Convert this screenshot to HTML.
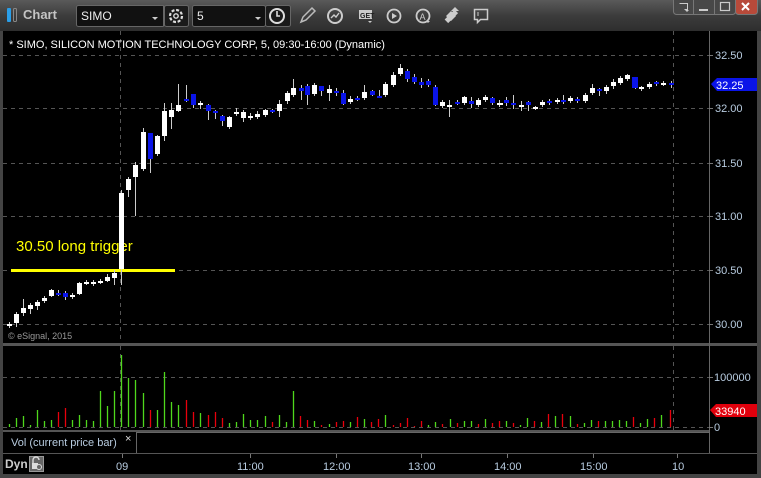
<!DOCTYPE html>
<html><head><meta charset="utf-8"><style>
*{margin:0;padding:0;box-sizing:border-box}
body{width:761px;height:478px;background:#3a3a3a;overflow:hidden;font-family:"Liberation Sans",sans-serif;position:relative}
.tb{position:absolute;left:0;top:0;width:761px;height:31px;background:linear-gradient(#5a5a5a,#3c3c3c 50%,#2e2e2e)}
.t{position:absolute;white-space:nowrap}
svg{position:absolute;left:0;top:0}
</style></head><body>
<div class="tb"></div>
<svg width="761" height="478" xmlns="http://www.w3.org/2000/svg">
<!-- title bar -->
<rect x="7" y="8" width="4" height="14" rx="1" fill="#2a9ee8"/>
<rect x="13.5" y="8.5" width="3" height="13" rx="1" fill="none" stroke="#888"/>
<rect x="76.5" y="5.5" width="88" height="21" rx="2" fill="#111" stroke="#666"/>
<line x1="163.5" y1="6" x2="163.5" y2="26" stroke="#666"/>
<path d="M152 17l3 3 3-3z" fill="#ccc"/>
<rect x="164.5" y="5.5" width="24" height="21" rx="2" fill="#1a1a1a" stroke="#666"/>
<circle cx="176" cy="16" r="6" fill="none" stroke="#ddd" stroke-width="2.2" stroke-dasharray="3 1.7"/><circle cx="176" cy="16" r="2.2" fill="none" stroke="#ddd" stroke-width="1.4"/>
<rect x="192.5" y="5.5" width="73" height="21" rx="2" fill="#111" stroke="#666"/>
<path d="M255 17l3 3 3-3z" fill="#ccc"/>
<rect x="265.5" y="5.5" width="25" height="21" rx="2" fill="#1a1a1a" stroke="#666"/>
<circle cx="277" cy="16" r="7" fill="none" stroke="#ddd" stroke-width="2"/><path d="M277 11v5h3" stroke="#ddd" stroke-width="1.6" fill="none"/>
<path d="M301 22l2-5 9-9 3 3-9 9z" fill="none" stroke="#bbb" stroke-width="1.5"/>
<circle cx="335" cy="16" r="7" fill="none" stroke="#ccc" stroke-width="2"/><path d="M331 18l3-3 2 2 3-4" stroke="#ccc" stroke-width="1.4" fill="none"/>
<rect x="359" y="10" width="13" height="9" fill="#ccc"/><text x="360" y="18" font-size="7" font-weight="bold" fill="#222" font-family="Liberation Sans">GET</text><path d="M368 21l2 2 2-2z" fill="#ccc"/>
<circle cx="394" cy="16" r="6.5" fill="none" stroke="#ccc" stroke-width="1.8"/><path d="M392 13v6l5-3z" fill="#ccc"/>
<circle cx="423" cy="16" r="6.5" fill="none" stroke="#ccc" stroke-width="1.8"/><text x="419.5" y="20" font-size="9" fill="#ccc" font-family="Liberation Sans">A</text><path d="M426 21l2 2 2-2z" fill="#ccc"/>
<path d="M446 16l5-5 5 5-5 5z M451 11l4-4 4 4" fill="#ccc"/><rect x="444" y="14" width="14" height="5" transform="rotate(-45 451 16)" fill="#ccc"/>
<path d="M474.5 9.5h13v10h-7l-3 3v-3h-3z" fill="none" stroke="#ccc" stroke-width="1.5"/><line x1="478" y1="12" x2="478" y2="16" stroke="#ccc"/>
<!-- window buttons -->
<rect x="673.5" y="-2.5" width="62" height="17" rx="3" fill="#484848" stroke="#777"/>
<line x1="693.5" y1="0" x2="693.5" y2="14" stroke="#777"/><line x1="714.5" y1="0" x2="714.5" y2="14" stroke="#777"/>
<rect x="735.5" y="-2.5" width="22" height="17" rx="3" fill="#b84a3a" stroke="#777"/>
<path d="M679.5 3.5h8v6h-3" fill="none" stroke="#ccc"/><path d="M685 10l2 2 2-2z" fill="#ccc"/>
<rect x="699" y="9" width="9" height="2" fill="#ccc"/>
<rect x="720.5" y="2.5" width="9" height="8" fill="none" stroke="#ccc" stroke-width="1.2"/>
<path d="M742 3l7 7M749 3l-7 7" stroke="#fff" stroke-width="2"/>
<!-- main chart area -->
<rect x="3" y="31" width="755" height="444" fill="#000"/>
<rect x="0" y="31" width="3" height="447" fill="#444"/>
<rect x="757" y="31" width="4" height="447" fill="#444"/>
<rect x="3" y="343" width="754" height="3" fill="#555"/>
<line x1="709.5" y1="31" x2="709.5" y2="454" stroke="#666"/>
<g stroke="#555" stroke-dasharray="4 4">
<line x1="3" y1="55.5" x2="709" y2="55.5"/><line x1="3" y1="108.5" x2="709" y2="108.5"/><line x1="3" y1="163.5" x2="709" y2="163.5"/><line x1="3" y1="216.5" x2="709" y2="216.5"/><line x1="3" y1="270.5" x2="709" y2="270.5"/><line x1="3" y1="324.5" x2="709" y2="324.5"/>
<line x1="3" y1="377.5" x2="709" y2="377.5"/><line x1="3" y1="427.5" x2="709" y2="427.5"/>
<line x1="120.5" y1="31" x2="120.5" y2="343"/><line x1="673.5" y1="31" x2="673.5" y2="343"/>
<line x1="120.5" y1="346" x2="120.5" y2="430"/><line x1="673.5" y1="346" x2="673.5" y2="430"/>
</g>
<g fill="#b8cce0" font-size="11" font-family="Liberation Sans">
<text x="715" y="59">32.50</text><text x="715" y="112">32.00</text><text x="715" y="167">31.50</text><text x="715" y="220">31.00</text><text x="715" y="274">30.50</text><text x="715" y="328">30.00</text>
<text x="714" y="381">100000</text><text x="714" y="431">0</text>
</g>
<g stroke="#777"><line x1="709" y1="55.5" x2="713" y2="55.5"/><line x1="709" y1="108.5" x2="713" y2="108.5"/><line x1="709" y1="163.5" x2="713" y2="163.5"/><line x1="709" y1="216.5" x2="713" y2="216.5"/><line x1="709" y1="270.5" x2="713" y2="270.5"/><line x1="709" y1="324.5" x2="713" y2="324.5"/><line x1="709" y1="377.5" x2="713" y2="377.5"/><line x1="709" y1="427.5" x2="713" y2="427.5"/></g>
<path d="M711 84l6-6h40v13h-40z" fill="#0a14e8"/><text x="716" y="89" font-size="11" fill="#fff" font-family="Liberation Sans">32.25</text>
<path d="M710 410l6-6h41v13h-41z" fill="#e0000c"/><text x="715" y="415" font-size="11" fill="#fff" font-family="Liberation Sans">33940</text>
<text x="9" y="48" font-size="11" fill="#fff" font-family="Liberation Sans">* SIMO, SILICON MOTION TECHNOLOGY CORP, 5, 09:30-16:00 (Dynamic)</text>
<text x="8" y="339" font-size="9" fill="#999" font-family="Liberation Sans">© eSignal, 2015</text>
<!-- trigger -->
<rect x="11" y="269" width="164" height="3" fill="#ffff00"/>
<text x="16" y="251" font-size="15" fill="#ffff00" font-family="Liberation Sans">30.50 long trigger</text>
<!-- candles -->
<g stroke="#ccc" stroke-width="1">
<path d="M9.5 322v6M16.5 312v15M23.5 299v17M30.5 303v11M37.5 300v10M44.5 296v7M51.5 289v8M58.5 290v6M65.5 291v9M72.5 293v6M79.5 282v13M86.5 280v5M93.5 280v6M100.5 279v5M107.5 274v8M114.5 270v15M121.5 190v95M128.5 177v20M135.5 162v54M143.5 128v43M150.5 133v40M157.5 135v21M164.5 103v38M171.5 103v26M178.5 84v28M186.5 85v17M193.5 94v14M200.5 101v8M208.5 104v16M215.5 110v9M222.5 115v11M229.5 116v13M236.5 108v8M243.5 110v12M250.5 113v7M257.5 111v8M265.5 109v8M272.5 109v4M279.5 100v17M287.5 91v13M293.5 79v18M301.5 85v15M307.5 84v21M314.5 83v13M321.5 86v10M329.5 85v16M336.5 88v8M343.5 90v15M350.5 96v8M357.5 96v5M364.5 85v15M372.5 90v6M379.5 90v8M385.5 82v15M393.5 72v15M400.5 64v12M407.5 69v13M414.5 74v10M421.5 78v10M428.5 79v8M435.5 85v21M442.5 100v8M449.5 100v17M457.5 100v5M464.5 96v9M471.5 97v11M478.5 98v9M485.5 95v7M492.5 97v8M499.5 100v7M506.5 97v9M513.5 95v14M521.5 101v10M528.5 101v10M535.5 106v4M542.5 100v7M549.5 99v6M557.5 98v6M563.5 95v9M570.5 96v7M577.5 97v6M585.5 93v10M592.5 84v11M599.5 88v8M606.5 85v9M613.5 79v10M620.5 76v9M627.5 74v7M635.5 77v12M641.5 86v5M649.5 82v7M656.5 81v5M663.5 81v5M671.5 81v7"/>
</g>
<g fill="#fff">
<rect x="7" y="324" width="5" height="2"/><rect x="14" y="314" width="5" height="9"/><rect x="21" y="308" width="5" height="5"/><rect x="28" y="305" width="5" height="4"/><rect x="35" y="302" width="5" height="4"/><rect x="42" y="298" width="5" height="3"/><rect x="49" y="290" width="5" height="6"/><rect x="70" y="295" width="5" height="2"/><rect x="77" y="283" width="5" height="11"/><rect x="84" y="282" width="5" height="2"/><rect x="91" y="282" width="5" height="2"/><rect x="98" y="281" width="5" height="2"/><rect x="105" y="277" width="5" height="4"/><rect x="112" y="273" width="5" height="5"/><rect x="119" y="193" width="5" height="76"/><rect x="126" y="179" width="5" height="11"/><rect x="133" y="165" width="5" height="12"/><rect x="141" y="132" width="5" height="37"/><rect x="155" y="136" width="5" height="18"/><rect x="162" y="111" width="5" height="25"/><rect x="169" y="110" width="5" height="7"/><rect x="176" y="105" width="5" height="6"/><rect x="198" y="103" width="5" height="2"/><rect x="227" y="117" width="5" height="10"/><rect x="234" y="112" width="5" height="2"/><rect x="241" y="112" width="5" height="6"/><rect x="248" y="116" width="5" height="2"/><rect x="255" y="114" width="5" height="3"/><rect x="263" y="110" width="5" height="5"/><rect x="277" y="104" width="5" height="7"/><rect x="285" y="93" width="5" height="8"/><rect x="291" y="88" width="5" height="7"/><rect x="312" y="85" width="5" height="9"/><rect x="327" y="89" width="5" height="4"/><rect x="348" y="99" width="5" height="3"/><rect x="362" y="92" width="5" height="6"/><rect x="383" y="84" width="5" height="11"/><rect x="391" y="75" width="5" height="10"/><rect x="398" y="68" width="5" height="6"/><rect x="440" y="102" width="5" height="4"/><rect x="447" y="105" width="5" height="2"/><rect x="462" y="97" width="5" height="6"/><rect x="476" y="100" width="5" height="5"/><rect x="483" y="97" width="5" height="3"/><rect x="497" y="103" width="5" height="2"/><rect x="498" y="103" width="5" height="2"/><rect x="519" y="105" width="5" height="2"/><rect x="533" y="107" width="5" height="2"/><rect x="540" y="102" width="5" height="3"/><rect x="555" y="100" width="5" height="2"/><rect x="568" y="98" width="5" height="3"/><rect x="583" y="95" width="5" height="6"/><rect x="590" y="88" width="5" height="5"/><rect x="604" y="87" width="5" height="4"/><rect x="611" y="82" width="5" height="4"/><rect x="618" y="78" width="5" height="5"/><rect x="625" y="75" width="5" height="4"/><rect x="639" y="87" width="5" height="2"/><rect x="647" y="84" width="5" height="3"/><rect x="661" y="83" width="5" height="2"/>
</g>
<g fill="#0a14e8">
<rect x="56" y="293" width="5" height="2"/><rect x="63" y="293" width="5" height="4"/><rect x="148" y="133" width="5" height="26"/><rect x="184" y="99" width="5" height="2"/><rect x="191" y="94" width="5" height="11"/><rect x="206" y="105" width="5" height="6"/><rect x="213" y="111" width="5" height="2"/><rect x="220" y="116" width="5" height="5"/><rect x="270" y="110" width="5" height="2"/><rect x="299" y="88" width="5" height="3"/><rect x="305" y="86" width="5" height="9"/><rect x="319" y="86" width="5" height="5"/><rect x="334" y="91" width="5" height="2"/><rect x="341" y="93" width="5" height="11"/><rect x="355" y="98" width="5" height="2"/><rect x="370" y="91" width="5" height="4"/><rect x="377" y="96" width="5" height="2"/><rect x="405" y="71" width="5" height="8"/><rect x="412" y="77" width="5" height="5"/><rect x="419" y="82" width="5" height="3"/><rect x="426" y="81" width="5" height="4"/><rect x="433" y="87" width="5" height="18"/><rect x="455" y="102" width="5" height="2"/><rect x="469" y="101" width="5" height="3"/><rect x="490" y="98" width="5" height="5"/><rect x="504" y="100" width="5" height="3"/><rect x="511" y="103" width="5" height="2"/><rect x="526" y="102" width="5" height="3"/><rect x="547" y="101" width="5" height="2"/><rect x="561" y="100" width="5" height="2"/><rect x="575" y="99" width="5" height="2"/><rect x="597" y="89" width="5" height="2"/><rect x="632" y="77" width="6" height="11"/><rect x="654" y="82" width="5" height="2"/><rect x="669" y="83" width="5" height="2"/>
</g>
<!-- volume -->
<g stroke="#4fd81c" stroke-width="1.3">
<path d="M9.5 427v-3M16.5 427v-9M23.5 427v-11M30.5 427v-2M37.5 427v-17M44.5 427v-6M51.5 427v-7M72.5 427v-7M79.5 427v-12M86.5 427v-7M93.5 427v-6M100.5 427v-36M107.5 427v-21M114.5 427v-36M121.5 427v-72M128.5 427v-49M135.5 427v-47M143.5 427v-34M157.5 427v-17M164.5 427v-55M171.5 427v-25M178.5 427v-22M200.5 427v-14M229.5 427v-4M236.5 427v-5M243.5 427v-13M250.5 427v-7M257.5 427v-7M265.5 427v-11M279.5 427v-12M286.5 427v-5M293.5 427v-36M314.5 427v-6M329.5 427v-3M350.5 427v-5M364.5 427v-8M385.5 427v-12M428.5 427v-2M435.5 427v-5M450.5 427v-8M464.5 427v-6M471.5 427v-6M485.5 427v-8M506.5 427v-6M520.5 427v-2M527.5 427v-9M541.5 427v-5M555.5 427v-11M570.5 427v-11M584.5 427v-4M591.5 427v-7M605.5 427v-6M612.5 427v-6M619.5 427v-7M626.5 427v-6M640.5 427v-4M647.5 427v-8M661.5 427v-12"/>
</g>
<g stroke="#e8000c" stroke-width="1.3">
<path d="M58.5 427v-15M65.5 427v-19M150.5 427v-17M186.5 427v-27M193.5 427v-15M208.5 427v-12M215.5 427v-15M222.5 427v-9M272.5 427v-5M300.5 427v-11M307.5 427v-7M321.5 427v-2M336.5 427v-5M343.5 427v-6M357.5 427v-10M371.5 427v-5M378.5 427v-8M393.5 427v-2M400.5 427v-4M407.5 427v-9M414.5 427v-1M421.5 427v-6M442.5 427v-3M457.5 427v-4M478.5 427v-3M492.5 427v-4M499.5 427v-6M513.5 427v-4M534.5 427v-6M548.5 427v-13M562.5 427v-13M577.5 427v-3M598.5 427v-6M633.5 427v-10M654.5 427v-9M670.5 427v-17"/>
</g>
<!-- vol label / time axis -->
<rect x="3" y="430" width="706" height="2" fill="#555"/>
<rect x="136.5" y="432.5" width="573" height="21" fill="#000" stroke="#666"/>
<text x="11" y="446" font-size="11" fill="#b8cce0" font-family="Liberation Sans">Vol (current price bar)</text>
<text x="125" y="442" font-size="11" fill="#ddd" font-family="Liberation Sans">×</text>
<rect x="3" y="453" width="754" height="1" fill="#555"/>
<text x="5" y="468" font-size="12" font-weight="bold" fill="#ccc" font-family="Liberation Sans">Dyn</text>
<rect x="29.5" y="456.5" width="14" height="15" fill="#666" stroke="#999"/>
<path d="M33 463v-3a3 3 0 0 1 6 0" fill="none" stroke="#ddd" stroke-width="1.4"/><rect x="32" y="463" width="6" height="6" fill="#ddd"/><circle cx="39" cy="467" r="2.5" fill="#666" stroke="#ddd"/>
<g fill="#b8cce0" font-size="11" font-family="Liberation Sans">
<text x="116" y="470">09</text><text x="237" y="470">11:00</text><text x="323" y="470">12:00</text><text x="408" y="470">13:00</text><text x="494" y="470">14:00</text><text x="580" y="470">15:00</text><text x="672" y="470">10</text>
</g>
<g stroke="#777"><path d="M122.5 454v4M250.5 454v4M336.5 454v4M421.5 454v4M507.5 454v4M593.5 454v4M677.5 454v4"/></g>
<rect x="0" y="474" width="761" height="4" fill="#444"/>
</svg>
<div class="t" style="left:23px;top:7px;font-size:13px;font-weight:bold;color:#c4c4c4">Chart</div>
<div class="t" style="left:81px;top:9px;font-size:12px;color:#eee">SIMO</div>
<div class="t" style="left:197px;top:9px;font-size:12px;color:#eee">5</div>
</body></html>
